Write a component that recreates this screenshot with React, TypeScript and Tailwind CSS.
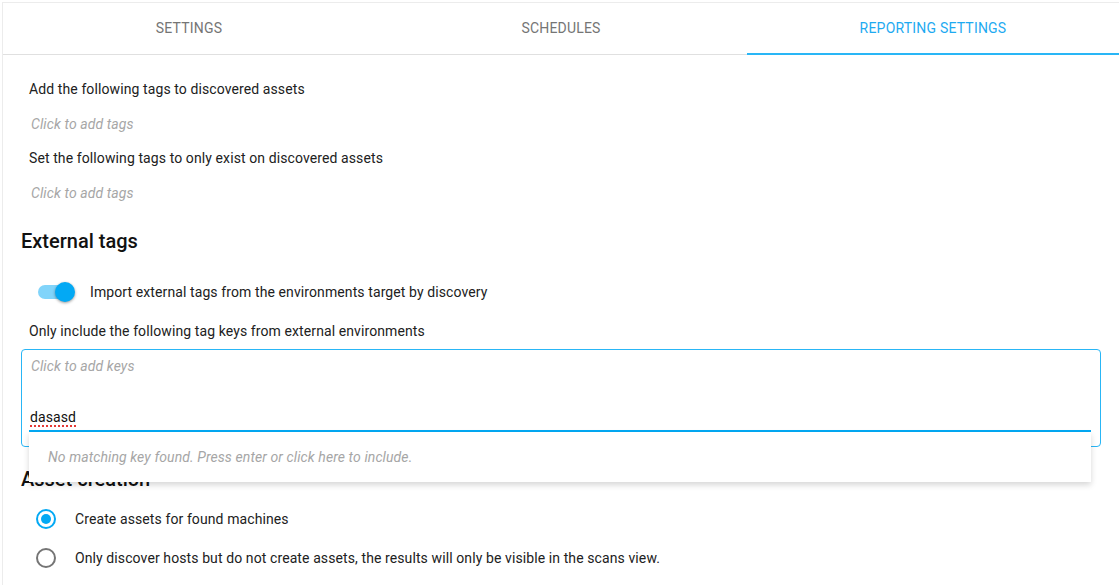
import React from 'react';

const TABS = ['Settings', 'Schedules', 'Reporting settings'];

function Tabs({ active }: { active: number }) {
  return (
    <div className="flex h-[52px] border-b border-[#e0e0e0]">
      {TABS.map((t, i) => (
        <div
          key={t}
          className={
            'relative flex-1 flex items-center justify-center text-[14px] uppercase tracking-[0.2px] ' +
            (i === active ? 'text-[#1eaaf1]' : 'text-[#757575]')
          }
        >
          {t}
          {i === active && <div className="absolute left-0 right-0 bottom-[-1px] h-[2px] bg-[#29b6f6]" />}
        </div>
      ))}
    </div>
  );
}

function Toggle({ label }: { label: string }) {
  return (
    <div className="flex items-center h-[24px] mt-[25px] ml-[17px]">
      <div className="relative w-[36px] h-[14px] rounded-full bg-[#81d4fa]">
        <div className="absolute right-[-1px] top-[-3px] w-[20px] h-[20px] rounded-full bg-[#03a9f4] shadow-[0_1px_3px_rgba(0,0,0,0.4)]" />
      </div>
      <span className="ml-[16px] text-[14px] tracking-[0.1px] text-[#212121]">{label}</span>
    </div>
  );
}

function Radio({ checked, label }: { checked: boolean; label: string }) {
  return (
    <div className="flex items-center h-[24px] ml-[15px]">
      <div
        className={
          'w-[20px] h-[20px] rounded-full border-2 flex items-center justify-center ' +
          (checked ? 'border-[#03a9f4]' : 'border-[#757575]')
        }
      >
        {checked && <div className="w-[10px] h-[10px] rounded-full bg-[#03a9f4]" />}
      </div>
      <span className="ml-[19px] text-[14px] tracking-[0.1px] text-[#212121]">{label}</span>
    </div>
  );
}

export default function App() {
  return (
    <div className="w-full h-[585px] overflow-hidden bg-white pt-[2px] pl-[2px]" style={{ fontFamily: 'Roboto, "Liberation Sans", sans-serif' }}>
      <div className="h-full border-l border-t border-[#ececec]">
        <Tabs active={2} />

        <div className="px-[18px] tracking-[0.1px]">
          <div className="ml-[8px] mt-[24px] leading-[20px] text-[14px] text-[#212121]">Add the following tags to discovered assets</div>
          <div className="ml-[10px] mt-[15px] leading-[20px] text-[14px] italic text-[#a6a6a6]">Click to add tags</div>
          <div className="ml-[8px] mt-[14px] leading-[20px] text-[14px] text-[#212121]">Set the following tags to only exist on discovered assets</div>
          <div className="ml-[10px] mt-[15px] leading-[20px] text-[14px] italic text-[#a6a6a6]">Click to add tags</div>

          <h2 className="mt-[24px] text-[20px] leading-[28px] font-medium tracking-normal text-[#111]">External tags</h2>

          <Toggle label="Import external tags from the environments target by discovery" />

          <div className="ml-[8px] mt-[17px] leading-[20px] text-[14px] text-[#212121]">Only include the following tag keys from external environments</div>

          <div className="relative mt-[8px] h-[98px] border border-[#29b6f6] rounded-[4px]">
            <div className="ml-[9px] mt-[6px] leading-[20px] text-[14px] italic text-[#a6a6a6]">Click to add keys</div>
            <div className="ml-[7px] mr-[9px] mt-[28px] h-[28px] flex items-center border-b-2 border-[#03a9f4]">
              <span className="ml-[1px] text-[14px] text-[#111] underline decoration-dotted decoration-[#e53935] decoration-2 underline-offset-[4px]">dasasd</span>
            </div>
            <div className="absolute z-10 left-[7px] right-[9px] top-[82px] h-[50px] bg-white shadow-[0_3px_6px_rgba(0,0,0,0.16)] flex items-center pl-[19px]">
              <span className="text-[14px] italic text-[#a6a6a6]">No matching key found. Press enter or click here to include.</span>
            </div>
          </div>

          <h2 className="mt-[18px] text-[20px] leading-[28px] font-medium tracking-normal text-[#111]">Asset creation</h2>

          <div className="mt-[14px] flex flex-col gap-[15px]">
            <Radio checked label="Create assets for found machines" />
            <Radio checked={false} label="Only discover hosts but do not create assets, the results will only be visible in the scans view." />
          </div>
        </div>
      </div>
    </div>
  );
}
